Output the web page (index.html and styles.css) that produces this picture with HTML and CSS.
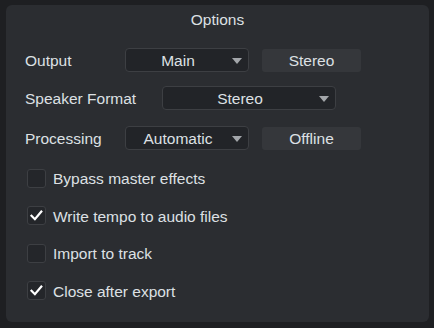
FILE: index.html
```html
<!DOCTYPE html>
<html>
<head>
<meta charset="utf-8">
<link rel="stylesheet" href="styles.css">
</head>
<body>
<div class="panel">
  <div class="title">Options</div>
  <div class="row row-1">
    <span class="lbl">Output</span>
    <div class="dd dd-short"><span class="dd-text">Main</span><span class="arrow"></span></div>
    <div class="btn">Stereo</div>
  </div>
  <div class="row row-2">
    <span class="lbl lbl-wide">Speaker Format</span>
    <div class="dd dd-long"><span class="dd-text">Stereo</span><span class="arrow"></span></div>
  </div>
  <div class="row row-3">
    <span class="lbl">Processing</span>
    <div class="dd dd-short"><span class="dd-text">Automatic</span><span class="arrow"></span></div>
    <div class="btn">Offline</div>
  </div>
  <div class="checks">
    <label class="check"><span class="box"></span><span class="ctext">Bypass master effects</span></label>
    <label class="check"><span class="box"><svg viewBox="0 0 19 19" width="19" height="19"><path d="M4.5 9.8 L7.9 13.2 L14.3 5.6" fill="none" stroke="#ffffff" stroke-width="2.2" stroke-linecap="square"/></svg></span><span class="ctext">Write tempo to audio files</span></label>
    <label class="check"><span class="box"></span><span class="ctext">Import to track</span></label>
    <label class="check"><span class="box"><svg viewBox="0 0 19 19" width="19" height="19"><path d="M4.5 9.8 L7.9 13.2 L14.3 5.6" fill="none" stroke="#ffffff" stroke-width="2.2" stroke-linecap="square"/></svg></span><span class="ctext">Close after export</span></label>
  </div>
</div>
</body>
</html>
```
FILE: styles.css
```css
html, body {
  margin: 0;
  padding: 0;
  background: #1e1f22;
}
body {
  width: 434px;
  height: 328px;
  overflow: hidden;
  font-family: "Liberation Sans", Arial, sans-serif;
  font-size: 15.5px;
  color: #dde0e4;
}
.panel {
  margin: 5px 0 0 6px;
  width: 423px;
  height: 317px;
  box-sizing: border-box;
  background: #2b2d31;
  border-radius: 6px;
  padding: 0 0 0 19px;
}
.title {
  height: 30px;
  line-height: 30px;
  text-align: center;
  padding-right: 19px;
}
.row {
  display: flex;
  align-items: center;
  height: 24px;
}
.row-1 { margin-top: 13px; }
.row-2 { margin-top: 14px; }
.row-3 { margin-top: 16px; }
.lbl {
  width: 100px;
  flex: none;
  padding-top: 2px;
}
.lbl-wide { width: 137px; }
.dd {
  position: relative;
  height: 24px;
  box-sizing: border-box;
  background: #222428;
  border: 1px solid #3d3f43;
  border-radius: 4px;
  display: flex;
  align-items: center;
  padding-right: 18px;
  flex: none;
}
.dd-short { width: 124px; }
.dd-long { width: 174px; }
.dd-text {
  flex: 1;
  text-align: center;
  padding-top: 2px;
}
.arrow {
  position: absolute;
  right: 6px;
  top: 9px;
  width: 0;
  height: 0;
  border-left: 5px solid transparent;
  border-right: 5px solid transparent;
  border-top: 6px solid #a3a6aa;
}
.btn {
  margin-left: 13px;
  width: 99px;
  height: 23px;
  line-height: 24px;
  background: #35373b;
  border-radius: 3px;
  text-align: center;
  flex: none;
}
.checks {
  margin-top: 18.5px;
  display: flex;
  flex-direction: column;
  gap: 18.5px;
  padding-left: 2px;
}
.check {
  display: flex;
  align-items: center;
  gap: 7px;
  height: 19px;
}
.ctext {
  padding-top: 2px;
}
.box {
  width: 19px;
  height: 19px;
  box-sizing: border-box;
  background: #24262a;
  border: 1px solid #3d3f43;
  border-radius: 3px;
  flex: none;
  position: relative;
}
.box svg {
  position: absolute;
  left: -1px;
  top: -1px;
}
```
